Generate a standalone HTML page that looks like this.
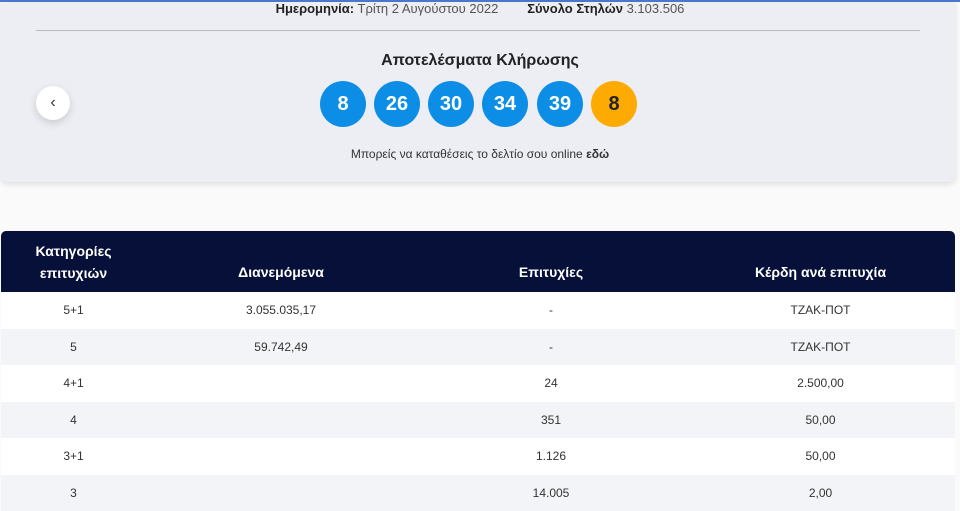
<!DOCTYPE html>
<html><head><meta charset="utf-8"><style>
*{margin:0;padding:0;box-sizing:border-box}
body{width:960px;height:495px;overflow:hidden;background:#fafafa;font-family:"Liberation Sans Narrow","Liberation Sans",sans-serif;color:#222;position:relative}
.topline{position:absolute;left:0;top:0;width:960px;height:2px;background:#4a78c8;z-index:2}
.panel{position:absolute;left:1px;top:0;width:954px;height:182px;background:#eceef4;border-radius:0 0 6px 6px;box-shadow:0 2px 6px rgba(0,0,0,.12)}
.info{position:absolute;top:1px;left:0;width:960px;text-align:center;font-size:13px;color:#555}
.info b{color:#222}
.sep{position:absolute;left:36px;top:30px;width:884px;height:1px;background:#b9bbc0}
.title{position:absolute;top:52px;left:0;width:960px;text-align:center;font-size:16px;font-weight:bold;color:#222;font-family:"Liberation Sans",sans-serif}
.ball{position:absolute;top:81px;width:46px;height:46px;border-radius:50%;background:#0c8ee6;color:#fff;font-weight:bold;font-size:20px;text-align:center;line-height:46px;font-family:"Liberation Sans",sans-serif}
.ball.y{background:#fdab02;color:#222}
.back{position:absolute;left:36px;top:86px;width:34px;height:34px;border-radius:50%;background:#fff;box-shadow:0 3px 8px rgba(0,0,0,.15);text-align:center;line-height:33px;font-size:16px;color:#333}
.note{position:absolute;top:147px;left:0;width:960px;text-align:center;font-size:12px;color:#333;font-family:"Liberation Sans",sans-serif}
.tbl{position:absolute;left:1px;top:231px;width:954px;border-radius:5px 5px 0 0;overflow:hidden}
table{width:100%;border-collapse:collapse;font-size:12px;font-family:"Liberation Sans",sans-serif}
thead tr{background:#061038;color:#fff;height:61px}
th{font-weight:bold;font-size:14px;line-height:22px}
td{text-align:center;height:36.5px;color:#333}
tbody tr:nth-child(odd){background:#fff}
tbody tr:nth-child(even){background:#f3f4f7}
.c1{width:145px}.c2{width:270px}.c3{width:270px}
</style></head><body>
<div class="topline"></div>
<div class="panel"></div>
<div class="info"><b>Ημερομηνία:</b> Τρίτη 2 Αυγούστου 2022 &nbsp;&nbsp;&nbsp;&nbsp;&nbsp;&nbsp; <b>Σύνολο Στηλών</b> 3.103.506</div>
<div class="sep"></div>
<div class="title">Αποτελέσματα Κλήρωσης</div>
<div class="back">‹</div>
<div class="ball" style="left:320px">8</div>
<div class="ball" style="left:374px">26</div>
<div class="ball" style="left:428px">30</div>
<div class="ball" style="left:482px">34</div>
<div class="ball" style="left:537px">39</div>
<div class="ball y" style="left:591px">8</div>
<div class="note">Μπορείς να καταθέσεις το δελτίο σου online <b>εδώ</b></div>
<div class="tbl"><table>
<thead><tr><th class="c1">Κατηγορίες<br>επιτυχιών</th><th class="c2" style="padding-top:20px">Διανεμόμενα</th><th class="c3" style="padding-top:20px">Επιτυχίες</th><th style="padding-top:20px">Κέρδη ανά επιτυχία</th></tr></thead>
<tbody>
<tr><td>5+1</td><td>3.055.035,17</td><td>-</td><td>ΤΖΑΚ-ΠΟΤ</td></tr>
<tr><td>5</td><td>59.742,49</td><td>-</td><td>ΤΖΑΚ-ΠΟΤ</td></tr>
<tr><td>4+1</td><td></td><td>24</td><td>2.500,00</td></tr>
<tr><td>4</td><td></td><td>351</td><td>50,00</td></tr>
<tr><td>3+1</td><td></td><td>1.126</td><td>50,00</td></tr>
<tr><td>3</td><td></td><td>14.005</td><td>2,00</td></tr>
</tbody></table></div>
</body></html>
